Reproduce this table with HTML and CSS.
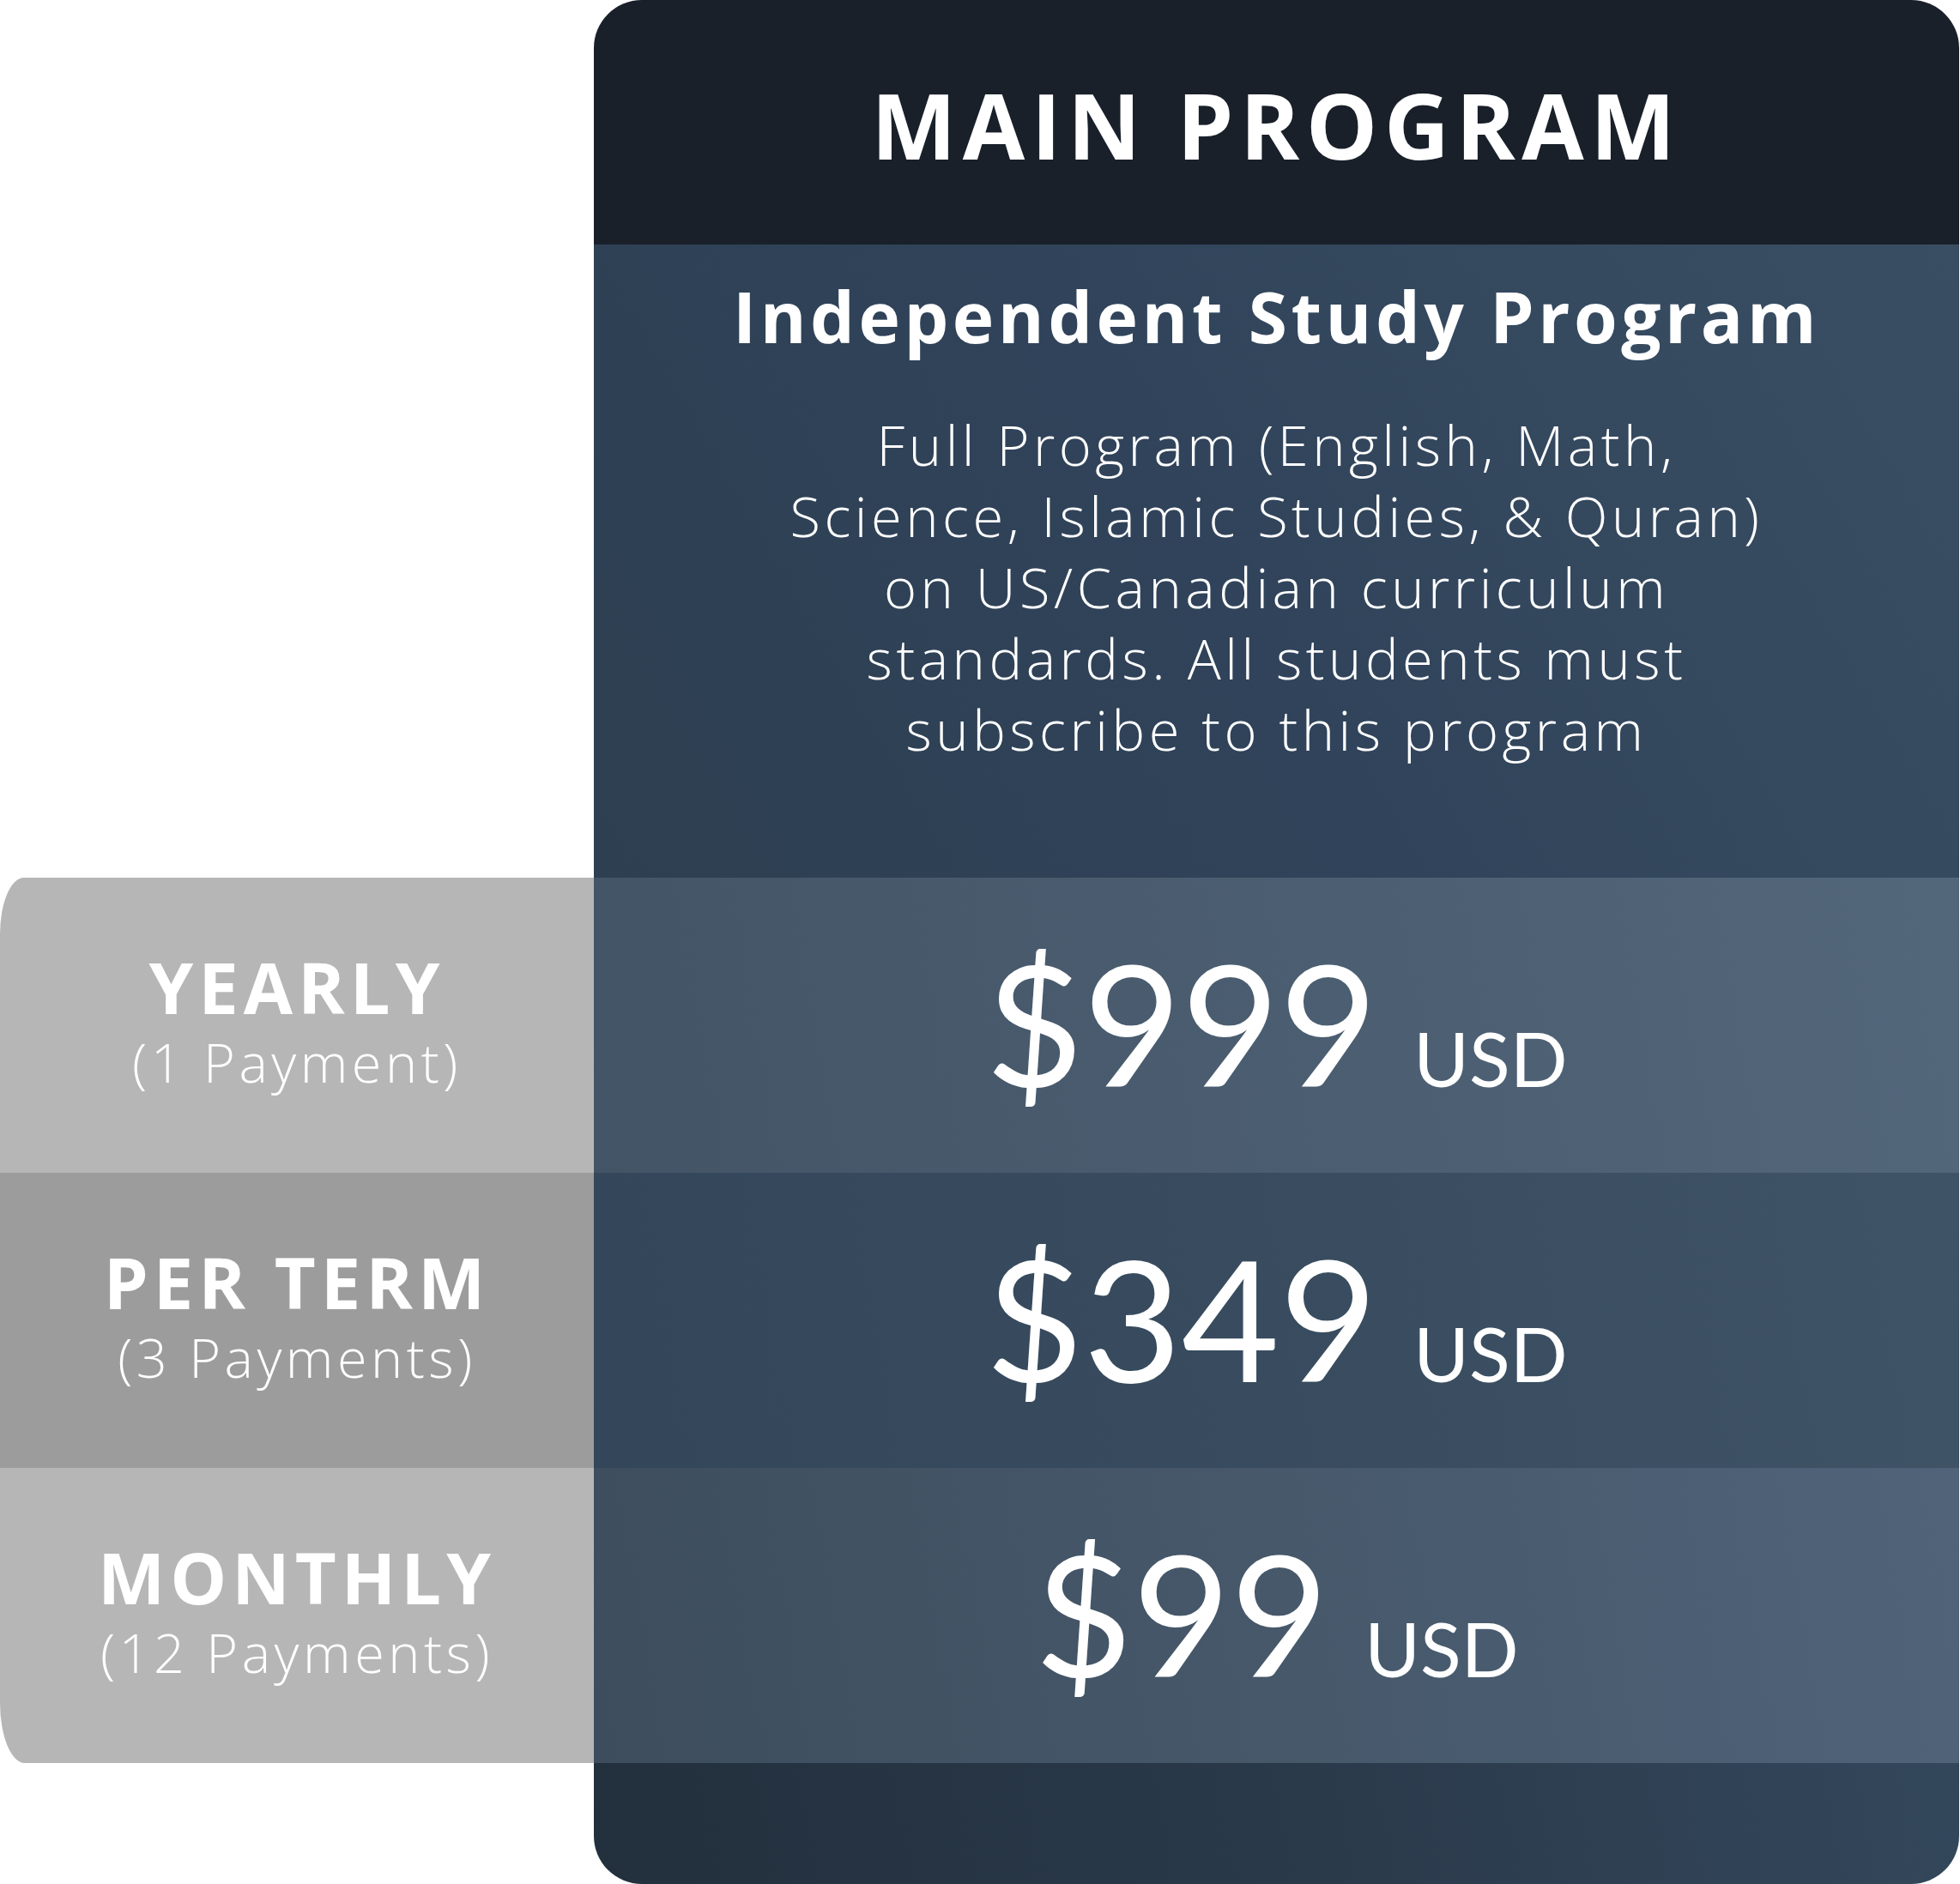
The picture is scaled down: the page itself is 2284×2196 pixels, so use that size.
FILE: index.html
```html
<!DOCTYPE html>
<html lang="en">
<head>
<meta charset="utf-8">
<title>Main Program Pricing</title>
<link rel="stylesheet" href="styles.css">
</head>
<body>
<div class="page">
  <div class="labels">
    <div class="label-row label-light label-first">
      <div class="label-title">YEARLY</div>
      <div class="label-sub">(1 Payment)</div>
    </div>
    <div class="label-row label-dark">
      <div class="label-title">PER TERM</div>
      <div class="label-sub">(3 Payments)</div>
    </div>
    <div class="label-row label-light label-last">
      <div class="label-title">MONTHLY</div>
      <div class="label-sub">(12 Payments)</div>
    </div>
  </div>
  <div class="card">
    <div class="card-head">
      <h1 class="card-title">MAIN PROGRAM</h1>
    </div>
    <div class="card-desc">
      <h2 class="desc-title">Independent Study Program</h2>
      <p class="desc-text">Full Program (English, Math,<br>Science, Islamic Studies, &amp; Quran)<br>on US/Canadian curriculum<br>standards. All students must<br>subscribe to this program</p>
    </div>
    <div class="price-row price-light">
      <span class="price">$999</span><span class="currency">USD</span>
    </div>
    <div class="price-row price-dark">
      <span class="price">$349</span><span class="currency">USD</span>
    </div>
    <div class="price-row price-light2">
      <span class="price">$99</span><span class="currency">USD</span>
    </div>
    <div class="card-foot"></div>
  </div>
</div>
</body>
</html>
```
FILE: styles.css
```css
html, body {
  margin: 0;
  padding: 0;
  background: #ffffff;
}

.page {
  width: 2284px;
  height: 2196px;
  display: flex;
  flex-direction: row;
  font-family: "Open Sans", "Noto Sans", sans-serif;
  color: #ffffff;
}

.labels {
  width: 692px;
  flex: none;
  padding-top: 1023px;
  display: flex;
  flex-direction: column;
}

.label-row {
  height: 344px;
  display: flex;
  flex-direction: column;
  align-items: center;
  justify-content: center;
  text-align: center;
}

.label-light { background: #b6b6b6; }
.label-dark { background: #9c9c9c; }

.label-first { border-top-left-radius: 28px 66px; }
.label-last { border-bottom-left-radius: 29px 70px; }

.label-title {
  font-weight: 700;
  font-size: 83px;
  line-height: 96px;
  letter-spacing: 6px;
  margin-top: -10px;
}

.label-sub {
  font-weight: 300;
  font-size: 63px;
  line-height: 80px;
  letter-spacing: 4.5px;
}

.card {
  width: 1591px;
  flex: none;
  border-radius: 56px;
  overflow: hidden;
  display: flex;
  flex-direction: column;
}

.card-head {
  height: 285px;
  background: #19202a;
  display: flex;
  align-items: center;
  justify-content: center;
}

.card-title {
  margin: 6px 0 0;
  font-weight: 700;
  font-size: 105px;
  line-height: 110px;
  letter-spacing: 7.5px;
}

.card-desc {
  height: 738px;
  box-sizing: border-box;
  padding-top: 33px;
  background: linear-gradient(60deg, #2d3f50 0%, #30435a 45%, #394e63 100%);
  text-align: center;
}

.desc-title {
  margin: 0;
  font-weight: 700;
  font-size: 82px;
  line-height: 100px;
  letter-spacing: 4.5px;
}

.desc-text {
  margin: 59px 0 0;
  font-weight: 300;
  font-size: 65px;
  line-height: 83px;
  letter-spacing: 4.5px;
}

.price-row {
  height: 344px;
  display: flex;
  align-items: baseline;
  justify-content: center;
  box-sizing: border-box;
  padding-top: 68px;
  font-family: "Lato", "Open Sans", sans-serif;
}

.price-light { background: linear-gradient(80deg, #435466 0%, #4b5d70 50%, #53677b 100%); }
.price-dark { background: linear-gradient(80deg, #33465a 0%, #394c5f 50%, #3f5367 100%); }
.price-light2 { background: linear-gradient(80deg, #3d4d5e 0%, #46586a 50%, #506379 100%); }

.price {
  font-size: 197px;
  line-height: 200px;
  font-weight: 400;
}

.currency {
  font-size: 88px;
  line-height: 100px;
  font-weight: 400;
  margin-left: 42px;
}

.card-foot {
  flex: 1;
  background: linear-gradient(80deg, #22303d 0%, #2a394a 50%, #33475b 100%);
}
```
